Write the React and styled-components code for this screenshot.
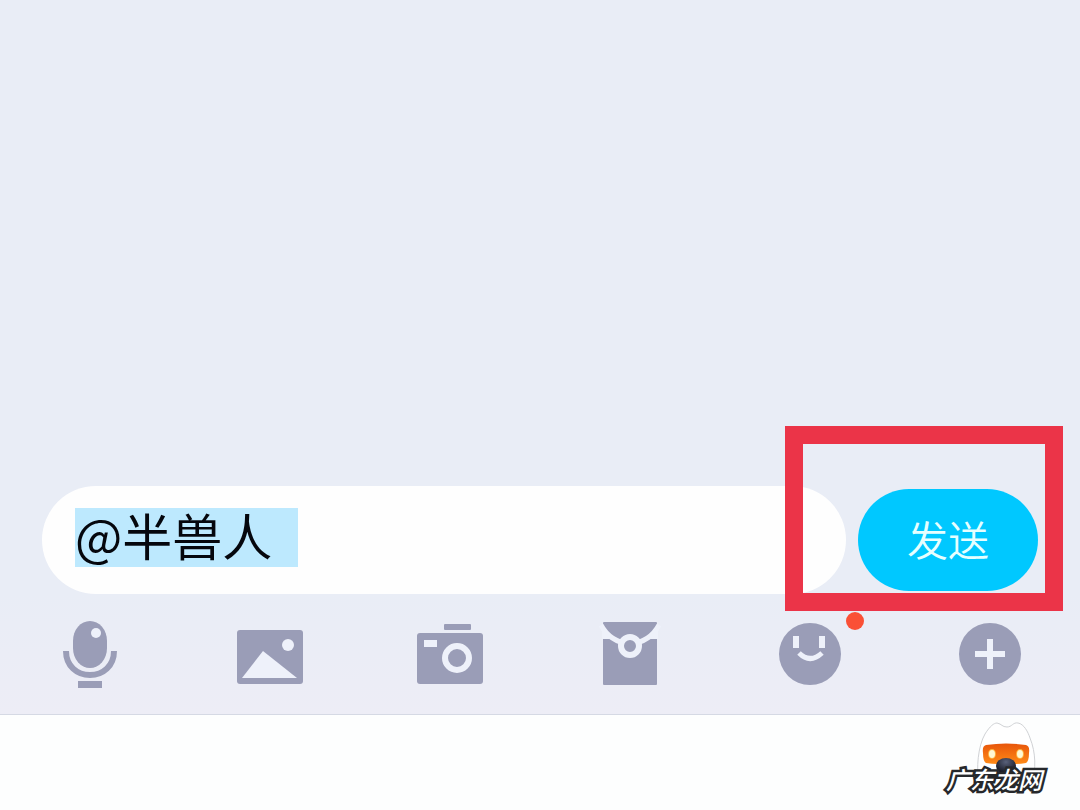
import React, { useState } from "react";
import styled, { createGlobalStyle } from "styled-components";

function App() {
	const [message, setMessage] = useState("@半兽人");

	return (
		<Page>
			<GlobalStyle />
			<Messages />
			<Composer onSubmit={(e) => e.preventDefault()}>
				<Field>
					<MessageInput
						aria-label="消息"
						autoComplete="off"
						value={message}
						onChange={(e) => setMessage(e.target.value)}
					/>
				</Field>
				<SendArea>
					<SendButton type="submit">发送</SendButton>
					<Frame />
				</SendArea>
			</Composer>
			<Toolbar>
				<ToolButton type="button" aria-label="语音">
					<Icon viewBox="0 0 72 72">
						<rect x="19" y="3" width="34" height="47" rx="17" ry="20" />
						<circle cx="42" cy="15" r="5" fill="#eef1fa" />
						<path d="M12 33C12 48 23 57 36 57S60 48 60 33" fill="none" stroke="#9a9db7" strokeWidth="6" />
						<rect x="24" y="63" width="24" height="7" />
					</Icon>
				</ToolButton>
				<ToolButton type="button" aria-label="图片">
					<Icon viewBox="0 0 72 72">
						<rect x="3" y="12" width="66" height="54" rx="3" />
						<circle cx="54" cy="27" r="6" fill="#eef1fa" />
						<path d="M8 60L29 33L63 60Z" fill="#eef1fa" />
					</Icon>
				</ToolButton>
				<ToolButton type="button" aria-label="拍照">
					<Icon viewBox="0 0 72 72">
						<rect x="30" y="6" width="27" height="6" rx="1" />
						<rect x="3" y="15" width="66" height="51" rx="3" />
						<rect x="10" y="22" width="13" height="7" fill="#eef1fa" />
						<circle cx="43" cy="40" r="12" fill="none" stroke="#eef1fa" strokeWidth="6" />
					</Icon>
				</ToolButton>
				<ToolButton type="button" aria-label="红包">
					<Icon viewBox="0 0 72 72">
						<rect x="9" y="4" width="54" height="63" rx="1" />
						<path d="M7 7Q16 24 36 26Q56 24 65 7" fill="none" stroke="#eef1fa" strokeWidth="5" />
						<path d="M8 5L8 21L16 21Z M64 5L64 21L56 21Z" fill="#eef1fa" />
						<circle cx="36" cy="28" r="9" fill="#9a9db7" stroke="#eef1fa" strokeWidth="6" />
					</Icon>
				</ToolButton>
				<ToolButton type="button" aria-label="表情">
					<Icon viewBox="0 0 72 72">
						<circle cx="36" cy="36" r="31" />
						<path d="M22 18V30M48 18V30" stroke="#eef1fa" strokeWidth="6" />
						<path d="M25 35Q36 46 48 35" fill="none" stroke="#eef1fa" strokeWidth="5" />
					</Icon>
					<Dot />
				</ToolButton>
				<ToolButton type="button" aria-label="更多">
					<Icon viewBox="0 0 72 72">
						<circle cx="36" cy="36" r="31" />
						<path d="M36 21V51M21 36H51" stroke="#eef1fa" strokeWidth="6" />
					</Icon>
				</ToolButton>
			</Toolbar>
			<Footer>
				<Brand>
					<Mascot />
					<BrandName>广东龙网</BrandName>
				</Brand>
			</Footer>
		</Page>
	);
}

function Mascot() {
	return (
		<MascotSvg viewBox="0 0 64 64">
			<defs>
				<linearGradient id="visor" x1="0" x2="0" y1="0" y2="1">
					<stop offset="0" stopColor="#e8560b" />
					<stop offset="1" stopColor="#ff8a16" />
				</linearGradient>
				<radialGradient id="nose" cx="0.5" cy="0.25" r="0.7">
					<stop offset="0" stopColor="#59617a" />
					<stop offset="1" stopColor="#11131f" />
				</radialGradient>
			</defs>
			<path
				d="M5 62C2 48 4 25 11 13C16 5 20 2 23 2C28 3 28 6 33 6C38 6 39 1 44 2C50 3 54 11 56 17C62 32 62 48 58 62"
				fill="#fff"
				stroke="#d0d2d5"
			/>
			<path d="M12 24Q32 21 52 24Q56 25 55 32Q55 40 52 42Q46 43 40 43H24Q18 43 12 42Q9 40 9 32Q8 25 12 24Z" fill="url(#visor)" />
			<ellipse cx="18" cy="33" rx="4" ry="5" fill="#ffb13d" />
			<ellipse cx="46" cy="33" rx="4" ry="5" fill="#ffb13d" />
			<ellipse cx="18" cy="33" rx="3" ry="4" fill="#fff8d4" />
			<ellipse cx="46" cy="33" rx="3" ry="4" fill="#fff8d4" />
			<ellipse cx="32" cy="45" rx="10" ry="8" fill="url(#nose)" />
		</MascotSvg>
	);
}

export default App;

const GlobalStyle = createGlobalStyle`
	* {
		box-sizing: border-box;
	}
	body {
		margin: 0;
		font-family: "Noto Sans CJK SC", sans-serif;
	}
	button, input {
		border: none;
		padding: 0;
		font-family: inherit;
	}
`;

const Page = styled.div`
	min-height: 100vh;
	display: flex;
	flex-direction: column;
	background: #e9edf6;
	overflow: hidden;
`;

const Messages = styled.main`
	flex: 1;
`;

const Composer = styled.form`
	display: flex;
	align-items: center;
	gap: 12px;
	padding: 0 42px;
`;

const Field = styled.div`
	flex: 1;
	min-width: 0;
	height: 108px;
	padding: 0 33px;
	border-radius: 54px;
	background: #fefefe;
`;

const MessageInput = styled.input`
	display: block;
	width: 100%;
	height: 108px;
	padding-bottom: 12px;
	font-size: 50px;
	color: #05070d;
	background: linear-gradient(#bde9fe, #bde9fe) no-repeat 0 22px / 223px 59px;
	outline: none;
`;

const SendArea = styled.div`
	position: relative;
	display: flex;
`;

const SendButton = styled.button`
	width: 180px;
	height: 102px;
	padding-bottom: 4px;
	border-radius: 51px;
	background: #00c8ff;
	color: #e6ffff;
	font-size: 41px;
	font-weight: 350;
	cursor: pointer;
`;

const Frame = styled.div`
	position: absolute;
	inset: -63px -25px -20px -73px;
	border: 18px solid #eb3448;
	pointer-events: none;
`;

const Toolbar = styled.div`
	display: flex;
	padding: 24px 0;
	border-bottom: 1px solid #d5d9e4;
	background: linear-gradient(#e9edf6, #ededf6);
`;

const ToolButton = styled.button`
	position: relative;
	flex: 1;
	display: flex;
	justify-content: center;
	background: none;
	cursor: pointer;
`;

const Icon = styled.svg`
	width: 72px;
	height: 72px;
	fill: #9a9db7;
`;

const Dot = styled.span`
	position: absolute;
	top: -6px;
	left: calc(50% + 36px);
	width: 18px;
	height: 18px;
	border-radius: 50%;
	background: #fa5036;
`;

const Footer = styled.footer`
	display: flex;
	justify-content: flex-end;
	height: 95px;
	padding: 6px 38px 0;
	background: #fdfefe;
`;

const Brand = styled.div`
	display: flex;
	flex-direction: column;
	align-items: center;
`;

const MascotSvg = styled.svg`
	width: 64px;
	height: 64px;
	margin-left: 24px;
`;

const BrandName = styled.span`
	position: relative;
	margin-top: -22px;
	font-size: 24px;
	font-weight: 500;
	font-style: italic;
	line-height: 32px;
	color: #fff;
	-webkit-text-stroke: 5px #26282b;
	paint-order: stroke fill;
`;
